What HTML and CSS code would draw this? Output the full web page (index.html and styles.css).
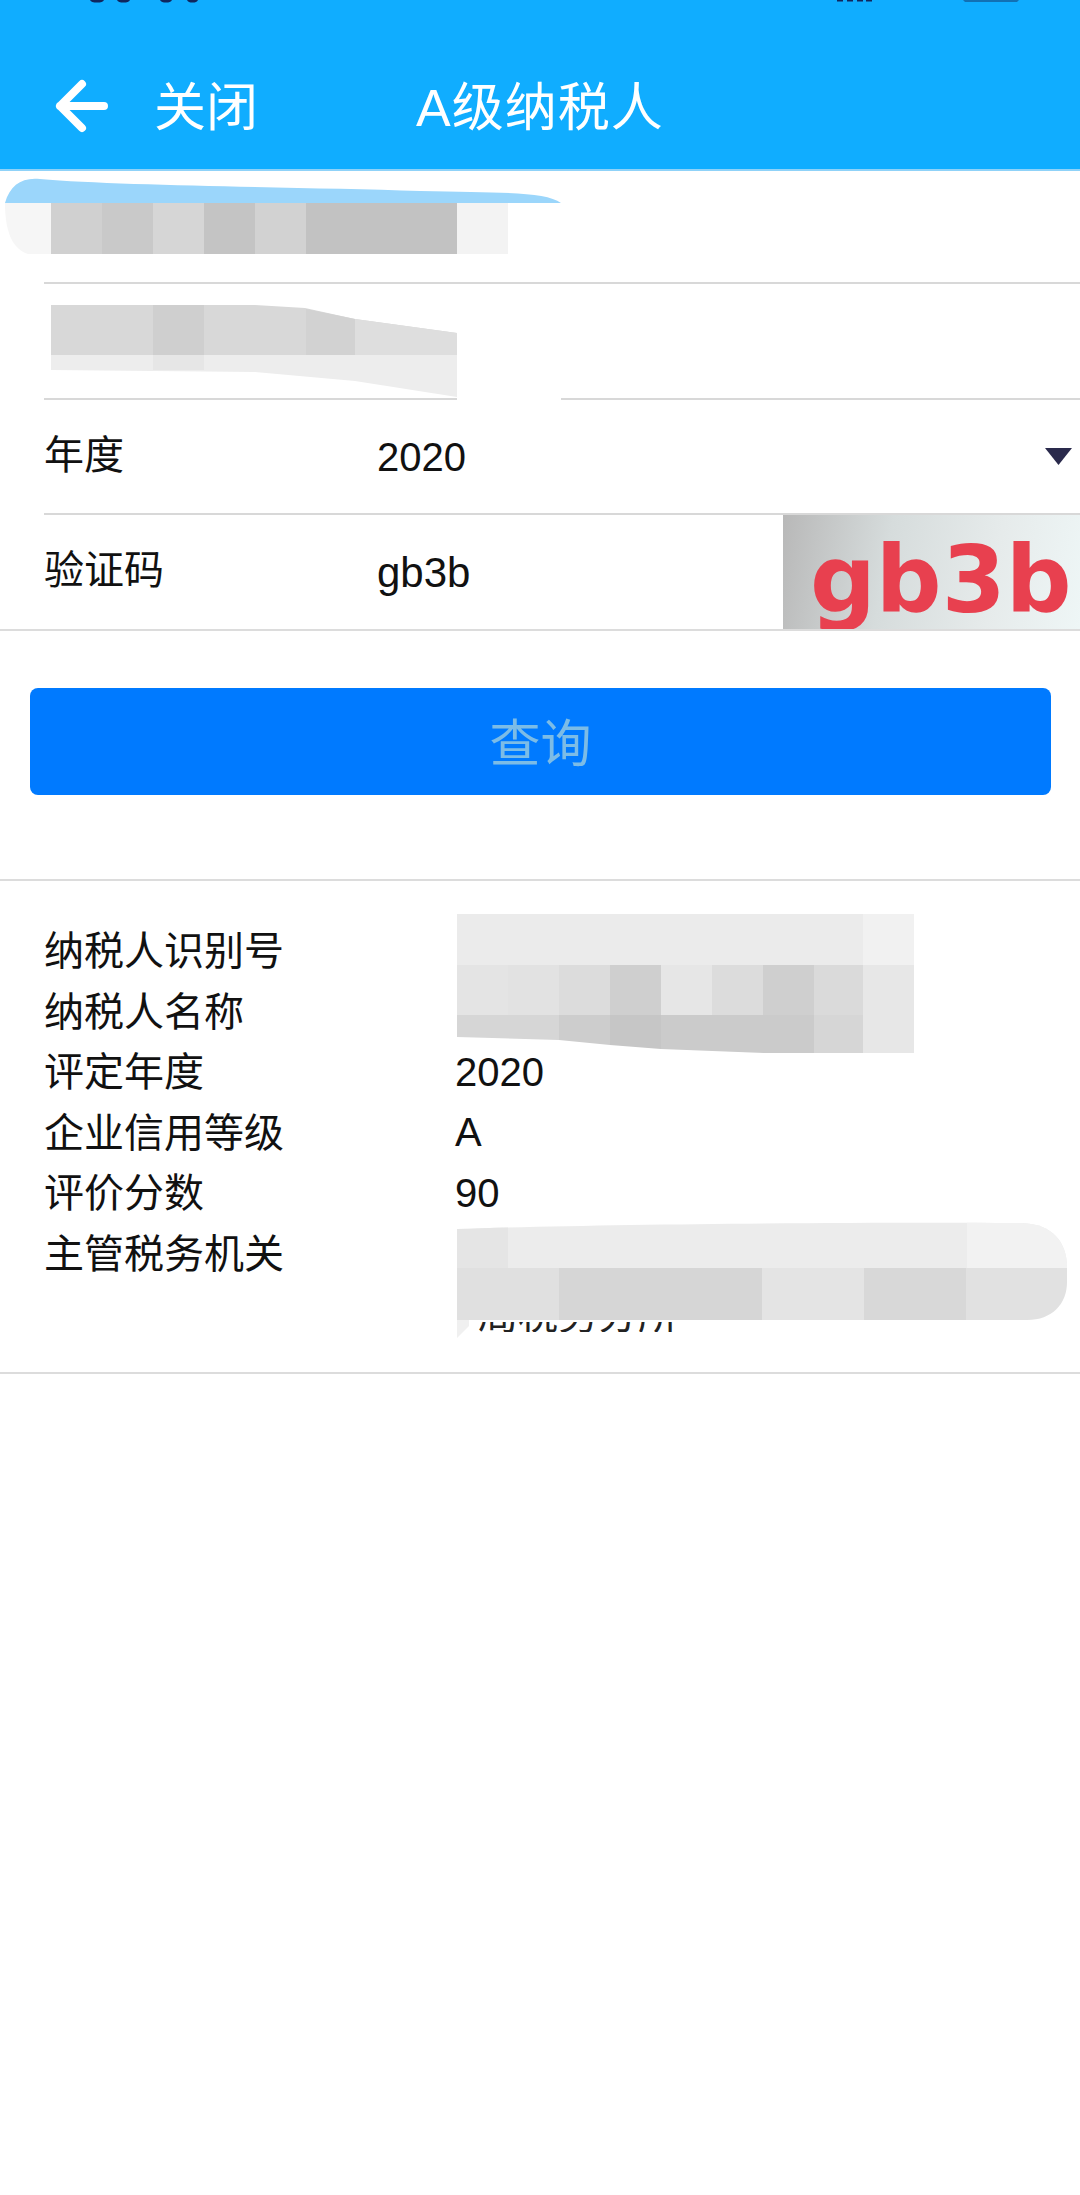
FILE: index.html
```html
<!DOCTYPE html>
<html lang="zh-CN">
<head>
<meta charset="utf-8">
<title>A级纳税人</title>
<link rel="stylesheet" href="styles.css">
</head>
<body>
<div class="page">
  <header class="topbar">
    <div class="status">
      <svg class="status-time" width="120" height="4" viewBox="0 0 120 4"><path d="M4 0h14c-1 2-3 2.500-7 2.500S5 2 4 0ZM31 0h13c-1 2-3 2.500-6.500 2.500S32 2 31 0ZM74 0h12c-1 2-3 2.500-6 2.500S75 2 74 0ZM101 0h11c-1 2-2.500 2.500-5.500 2.500S102 2 101 0Z" fill="#10265e"/></svg>
      <svg class="status-icons" width="182" height="4" viewBox="0 0 182 4"><path d="M0 0h6v1.500H0zM10 0h6v1.500h-6zM20 0h6v1.500h-6zM29 0h6v1.500h-6z" fill="#10265e"/><path d="M126 0h56l-2 2h-52z" fill="#1270b4"/></svg>
    </div>
    <div class="nav">
      <svg class="back" width="54" height="54" viewBox="0 0 54 54"><path d="M50 27H6M28 5 6 27l22 22" fill="none" stroke="#fff" stroke-width="8" stroke-linecap="round" stroke-linejoin="round"/></svg>
      <span class="close">关闭</span>
      <span class="title">A级纳税人</span>
    </div>
  </header>

  <section class="form">
    <div class="row row-tall row-first">
      <svg class="mosaic" width="561" height="112" viewBox="0 0 561 112">
        <path d="M5 32 C10 14 22 6 40 8 C120 15 300 16 420 20 C500 22 545 20 561 32Z" fill="#9bd6fb"/>
        <path d="M5 32h46v51H28C12 78 5 60 5 32Z" fill="#f6f6f6"/>
        <rect x="51" y="32" width="51" height="51" fill="#d0d0d0"/>
        <rect x="102" y="32" width="51" height="51" fill="#c9c9c9"/>
        <rect x="153" y="32" width="51" height="51" fill="#d6d6d6"/>
        <rect x="204" y="32" width="51" height="51" fill="#c4c4c4"/>
        <rect x="255" y="32" width="51" height="51" fill="#d2d2d2"/>
        <rect x="306" y="32" width="151" height="51" fill="#c2c2c2"/>
        <rect x="457" y="32" width="51" height="51" fill="#f3f3f3"/>
      </svg>
    </div>
    <div class="row row-tall row-hidden-line">
      <svg class="mosaic" width="561" height="116" viewBox="0 0 561 116">
        <path d="M51 21H255L305 24 355 35 457 49V71H51Z" fill="#d8d8d8"/>
        <rect x="153" y="21" width="51" height="50" fill="#cfcfcf"/>
        <path d="M306 25 355 35V71H306Z" fill="#d2d2d2"/>
        <path d="M355 35 457 49V71H355Z" fill="#dedede"/>
        <path d="M51 71H457V113L355 97 255 88 51 86Z" fill="#ededed"/>
        <rect x="153" y="71" width="51" height="15" fill="#e6e6e6"/>
        <rect x="457" y="110" width="104" height="6" fill="#fff"/>
      </svg>
    </div>
    <div class="row">
      <span class="label">年度</span>
      <span class="value">2020</span>
      <svg class="caret" width="27" height="17" viewBox="0 0 27 17"><path d="M0 0h27L13.500 17Z" fill="#2a2a4c"/></svg>
    </div>
    <div class="row row-last">
      <span class="label">验证码</span>
      <span class="value value-code">gb3b</span>
      <div class="captcha">gb3b</div>
    </div>
  </section>

  <div class="action"><button class="query" type="button">查询</button></div>

  <section class="info">
    <div class="info-row">
      <span class="label">纳税人识别号</span>
      <svg class="mosaic info-mosaic" width="457" height="139" viewBox="0 0 457 139">
        <rect width="457" height="51" fill="#ebebeb"/>
        <rect x="406" width="51" height="51" fill="#f1f1f1"/>
        <rect y="51" width="51" height="50" fill="#e4e4e4"/>
        <rect x="51" y="51" width="51" height="50" fill="#e2e2e2"/>
        <rect x="102" y="51" width="51" height="50" fill="#dcdcdc"/>
        <rect x="153" y="51" width="51" height="50" fill="#cfcfcf"/>
        <rect x="204" y="51" width="51" height="50" fill="#e6e6e6"/>
        <rect x="255" y="51" width="51" height="50" fill="#dcdcdc"/>
        <rect x="306" y="51" width="51" height="50" fill="#cfcfcf"/>
        <rect x="357" y="51" width="49" height="50" fill="#dadada"/>
        <rect x="406" y="51" width="51" height="50" fill="#e7e7e7"/>
        <path d="M0 101H102V126L0 123Z" fill="#d6d6d6"/>
        <path d="M102 101H153V131L102 126Z" fill="#cdcdcd"/>
        <path d="M153 101H204V135L153 131Z" fill="#c6c6c6"/>
        <path d="M204 101H357V139H307L204 135Z" fill="#cbcbcb"/>
        <rect x="357" y="101" width="49" height="38" fill="#d6d6d6"/>
        <rect x="406" y="101" width="51" height="38" fill="#e7e7e7"/>
      </svg>
    </div>
    <div class="info-row"><span class="label">纳税人名称</span></div>
    <div class="info-row"><span class="label">评定年度</span><span class="value">2020</span></div>
    <div class="info-row"><span class="label">企业信用等级</span><span class="value">A</span></div>
    <div class="info-row"><span class="label">评价分数</span><span class="value">90</span></div>
    <div class="info-row">
      <span class="label">主管税务机关</span>
      <div class="office-tail"><span>局税务分所</span></div>
      <svg class="mosaic office-mosaic" width="610" height="118" viewBox="0 0 610 118">
        <defs><clipPath id="office-clip"><path d="M0 7 C150 2 400 0 565 1 C595 2 610 20 610 45 V60 C610 82 595 98 570 98 H0Z"/></clipPath></defs>
        <path d="M0 98H12V104L0 116Z" fill="#f0f0f0"/>
        <g clip-path="url(#office-clip)">
          <rect width="610" height="46" fill="#ececec"/>
          <rect width="51" height="46" fill="#e5e5e5"/>
          <rect x="510" width="100" height="46" fill="#f2f2f2"/>
          <rect y="46" width="102" height="53" fill="#e0e0e0"/>
          <rect x="102" y="46" width="203" height="53" fill="#d6d6d6"/>
          <rect x="305" y="46" width="102" height="53" fill="#e4e4e4"/>
          <rect x="407" y="46" width="102" height="53" fill="#d8d8d8"/>
          <rect x="509" y="46" width="101" height="53" fill="#e1e1e1"/>
        </g>
      </svg>
    </div>
  </section>
</div>
</body>
</html>
```

FILE: styles.css
```css
* { box-sizing: border-box; }
html, body { margin: 0; padding: 0; background: #fff; }
body { font-family: "Liberation Sans", "Noto Sans CJK SC", sans-serif; color: #111; }
.page { width: 1080px; height: 2195px; overflow: hidden; background: #fff; }

.topbar { height: 171px; background: #10adff; border-bottom: 2px solid #8fd2f8; }
.status { height: 4px; display: flex; justify-content: space-between; padding: 0 61px 0 86px; }
.status-time, .status-icons { display: block; }
.nav { height: 166px; display: flex; align-items: center; padding: 38px 0 0 54px; color: #fff; font-size: 52px; }
.nav span { position: relative; top: -3px; }
.back { flex: none; }
.close { margin-left: 46px; width: 262px; }
.title { letter-spacing: 1px; }

.form { border-bottom: 2px solid #dcdcdc; }
.row { height: 115px; margin-left: 44px; border-bottom: 2px solid #d8d8d8; display: flex; align-items: center; font-size: 40px; }
.row-tall { margin-left: 0; border-bottom: 0; position: relative; display: block; }
.row-first { height: 113px; }
.row-hidden-line { height: 116px; }
.row-tall::after { content: ""; position: absolute; left: 44px; right: 0; bottom: 0; height: 2px; background: #d8d8d8; }
.row-hidden-line .mosaic { position: relative; z-index: 1; }
.mosaic { display: block; }
.row-last { height: 114px; border-bottom: 0; align-items: stretch; }
.label { flex: none; width: 333px; font-size: 40px; line-height: 1; }
.row .label { position: relative; top: -2px; }
.row-last .label { align-self: center; }
.value { font-size: 40px; }
.row .value { flex: 1; position: relative; top: 1px; }
.row-last .value { align-self: center; }
.value-code { font-size: 42px; top: 4px; }
.caret { margin-right: 8px; }
.captcha { width: 297px; background: linear-gradient(100deg, #b8b8b8 0%, #d6dcdc 35%, #e6ebeb 70%, #eef6f6 100%); color: #e8404f; font-family: "DejaVu Sans", sans-serif; font-weight: 700; font-size: 92px; line-height: 131px; padding-left: 27px; overflow: hidden; white-space: nowrap; }

.action { height: 250px; padding: 57px 30px 0; border-bottom: 2px solid #dcdcdc; }
.query { display: block; width: 1021px; height: 107px; border: 0; border-radius: 8px; background: #007aff; color: #7cbce6; font-family: inherit; font-size: 51px; padding: 0 0 4px; }

.info { height: 493px; padding-top: 40px; border-bottom: 2px solid #dcdcdc; }
.info-row { height: 60.500px; display: flex; align-items: center; padding-left: 44px; position: relative; }
.info-row .label { width: 411px; }
.info-mosaic { position: absolute; left: 457px; top: -7px; }
.office-mosaic { position: absolute; left: 457px; top: -2px; }
.office-tail { position: absolute; left: 478px; top: 98px; width: 212px; height: 10px; overflow: hidden; font-size: 40px; line-height: 40px; color: #222; }
.office-tail span { display: block; margin-top: -27px; white-space: nowrap; }
```
